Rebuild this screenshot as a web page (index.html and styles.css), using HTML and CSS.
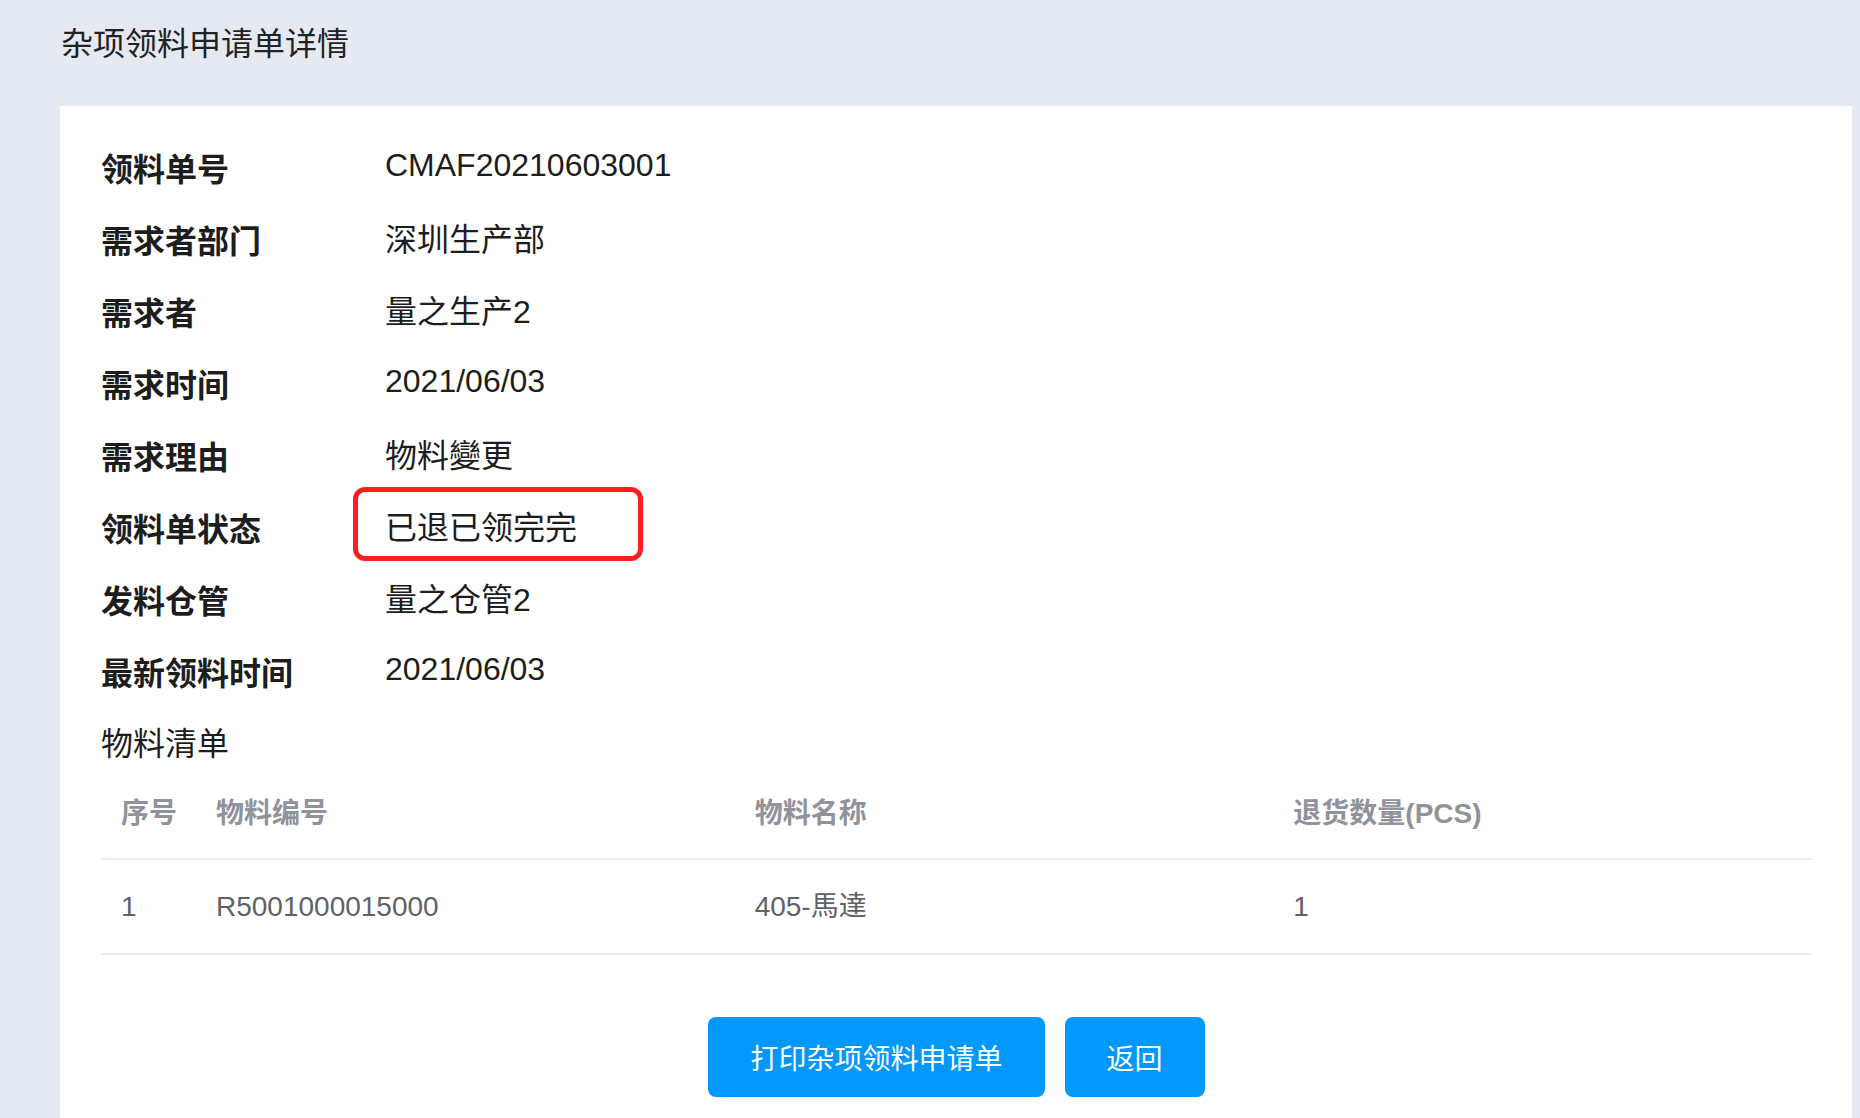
FILE: index.html
```html
<!DOCTYPE html>
<html lang="zh-CN">
<head>
<meta charset="utf-8">
<title>杂项领料申请单详情</title>
<link rel="stylesheet" href="styles.css">
</head>
<body>
<div class="page">
  <div class="page-title">杂项领料申请单详情</div>
  <div class="card">
    <div class="info">
      <div class="row"><span class="label">领料单号</span><span class="value latin">CMAF20210603001</span></div>
      <div class="row"><span class="label">需求者部门</span><span class="value">深圳生产部</span></div>
      <div class="row"><span class="label">需求者</span><span class="value">量之生产2</span></div>
      <div class="row"><span class="label">需求时间</span><span class="value latin">2021/06/03</span></div>
      <div class="row"><span class="label">需求理由</span><span class="value">物料變更</span></div>
      <div class="row"><span class="label">领料单状态</span><span class="value marked">已退已领完完</span></div>
      <div class="row"><span class="label">发料仓管</span><span class="value">量之仓管2</span></div>
      <div class="row"><span class="label">最新领料时间</span><span class="value latin">2021/06/03</span></div>
    </div>
    <div class="section-title">物料清单</div>
    <table class="items">
      <colgroup>
        <col class="col-idx">
        <col>
        <col>
        <col>
      </colgroup>
      <thead>
        <tr>
          <th>序号</th>
          <th>物料编号</th>
          <th>物料名称</th>
          <th>退货数量(PCS)</th>
        </tr>
      </thead>
      <tbody>
        <tr>
          <td>1</td>
          <td>R5001000015000</td>
          <td>405-馬達</td>
          <td>1</td>
        </tr>
      </tbody>
    </table>
    <div class="actions">
      <button class="btn">打印杂项领料申请单</button>
      <button class="btn">返回</button>
    </div>
  </div>
</div>
</body>
</html>
```

FILE: styles.css
```css
html, body {
  margin: 0;
  padding: 0;
}
body {
  background: #e5e9f2;
  font-family: "Liberation Sans", "Noto Sans CJK SC", sans-serif;
  color: #222;
  overflow: hidden;
}
.page {
  padding: 0 8px 0 60px;
}
.page-title {
  height: 106px;
  line-height: 88px;
  font-size: 32px;
  color: #222;
  padding-left: 1px;
}
.card {
  background: #fff;
  padding: 26px 40px 60px 41px;
  min-height: 1200px;
  box-sizing: border-box;
}
.row {
  display: flex;
  align-items: center;
  height: 72px;
}
.label {
  width: 284px;
  flex: none;
  font-size: 32px;
  font-weight: bold;
  color: #1d1d1d;
  position: relative;
  top: -1px;
}
.value {
  position: relative;
  font-size: 32px;
  line-height: 44px;
  color: #1d1d1d;
}
.value.latin {
  top: -3px;
}
.value.marked::after {
  content: "";
  position: absolute;
  left: -32px;
  top: -19px;
  width: 290px;
  height: 74px;
  box-sizing: border-box;
  border: 5px solid #ff1d1d;
  border-radius: 12px;
}
.section-title {
  height: 72px;
  line-height: 72px;
  font-size: 32px;
  color: #1d1d1d;
}
.items {
  width: 100%;
  table-layout: fixed;
  border-collapse: collapse;
  font-size: 28px;
}
.col-idx {
  width: 95px;
}
.items th {
  text-align: left;
  font-weight: bold;
  color: #909399;
  padding: 14px 20px 24px;
  line-height: 40px;
  white-space: nowrap;
  border-bottom: 2px solid #ebeef5;
}
.items td {
  text-align: left;
  color: #606266;
  padding: 24px 20px 23px;
  line-height: 46px;
  white-space: nowrap;
  border-bottom: 2px solid #ebeef5;
}
.actions {
  display: flex;
  justify-content: center;
  gap: 20px;
  margin-top: 62px;
}
.btn {
  height: 80px;
  padding: 0 42px;
  border: none;
  border-radius: 8px;
  background: #0098fa;
  color: #fff;
  font-family: "Liberation Sans", "Noto Sans CJK SC", sans-serif;
  font-size: 28px;
  cursor: pointer;
}
```
